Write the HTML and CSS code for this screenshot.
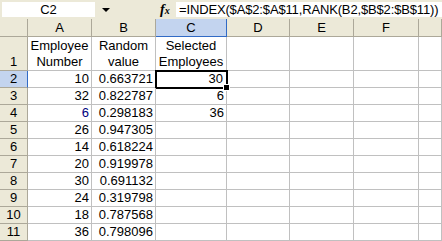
FILE: index.html
```html
<!DOCTYPE html>
<html lang="en">
<head>
    <meta charset="UTF-8">
    <title>Sheet</title>
    <link rel="stylesheet" href="styles.css">
</head>
<body>
    <div class="formula-bar">
        <div class="name-box">C2</div>
        <div class="name-arrow"></div>
        <div class="fx"><i>f</i><span class="x">x</span></div>
        <div class="formula">=INDEX($A$2:$A$11,RANK(B2,$B$2:$B$11))</div>
    </div>

    <div class="sheet">
        <div class="hd corner"></div>
        <div class="hd col">A</div>
        <div class="hd col">B</div>
        <div class="hd col sel">C</div>
        <div class="hd col">D</div>
        <div class="hd col">E</div>
        <div class="hd col">F</div>
        <div class="hd col"></div>

        <div class="hd row tall">1</div>
        <div class="cell label">Employee<br>Number</div>
        <div class="cell label">Random<br>value</div>
        <div class="cell label">Selected<br>Employees</div>
        <div class="cell"></div><div class="cell"></div><div class="cell"></div><div class="cell"></div>

        <div class="hd row sel">2</div>
        <div class="cell num">10</div><div class="cell num">0.663721</div>
        <div class="cell num active">30<span class="handle"></span></div>
        <div class="cell"></div><div class="cell"></div><div class="cell"></div><div class="cell"></div>

        <div class="hd row">3</div>
        <div class="cell num">32</div><div class="cell num">0.822787</div><div class="cell num">6</div>
        <div class="cell"></div><div class="cell"></div><div class="cell"></div><div class="cell"></div>

        <div class="hd row">4</div>
        <div class="cell num blue">6</div><div class="cell num">0.298183</div><div class="cell num">36</div>
        <div class="cell"></div><div class="cell"></div><div class="cell"></div><div class="cell"></div>

        <div class="hd row">5</div>
        <div class="cell num">26</div><div class="cell num">0.947305</div><div class="cell"></div>
        <div class="cell"></div><div class="cell"></div><div class="cell"></div><div class="cell"></div>

        <div class="hd row">6</div>
        <div class="cell num">14</div><div class="cell num">0.618224</div><div class="cell"></div>
        <div class="cell"></div><div class="cell"></div><div class="cell"></div><div class="cell"></div>

        <div class="hd row">7</div>
        <div class="cell num">20</div><div class="cell num">0.919978</div><div class="cell"></div>
        <div class="cell"></div><div class="cell"></div><div class="cell"></div><div class="cell"></div>

        <div class="hd row">8</div>
        <div class="cell num">30</div><div class="cell num">0.691132</div><div class="cell"></div>
        <div class="cell"></div><div class="cell"></div><div class="cell"></div><div class="cell"></div>

        <div class="hd row">9</div>
        <div class="cell num">24</div><div class="cell num">0.319798</div><div class="cell"></div>
        <div class="cell"></div><div class="cell"></div><div class="cell"></div><div class="cell"></div>

        <div class="hd row">10</div>
        <div class="cell num">18</div><div class="cell num">0.787568</div><div class="cell"></div>
        <div class="cell"></div><div class="cell"></div><div class="cell"></div><div class="cell"></div>

        <div class="hd row">11</div>
        <div class="cell num">36</div><div class="cell num">0.798096</div><div class="cell"></div>
        <div class="cell"></div><div class="cell"></div><div class="cell"></div><div class="cell"></div>
    </div>
</body>
</html>
```

FILE: styles.css
```css
body {
    margin: 0;
    width: 442px;
    height: 241px;
    overflow: hidden;
    background: #fff;
    font-family: "Liberation Sans", Arial, sans-serif;
    font-size: 13px;
    color: #000;
}

.formula-bar {
    display: flex;
    align-items: center;
    height: 19px;
    box-sizing: border-box;
    background: #ece9d8;
}

.name-box {
    width: 93px;
    height: 15px;
    margin-left: 2px;
    background: #fff;
    text-align: center;
    line-height: 15px;
}

.name-arrow {
    width: 0;
    height: 0;
    margin-left: 7px;
    border-left: 4px solid transparent;
    border-right: 4px solid transparent;
    border-top: 4px solid #000;
}

.fx {
    margin-left: 50px;
    width: 15px;
    font-family: "Liberation Serif", serif;
    font-size: 14px;
    font-weight: bold;
    line-height: 15px;
}

.fx .x {
    font-size: 10px;
    font-style: italic;
}

.formula {
    flex: 1;
    height: 15px;
    margin-left: 1px;
    padding-left: 3px;
    background: #fff;
    line-height: 15px;
    letter-spacing: -0.15px;
    white-space: nowrap;
}

.sheet {
    display: grid;
    grid-template-columns: 28px 64px 64px 71px 63px 64px 65px 1fr;
    grid-template-rows: 18px 34px repeat(10, 17px);
}

.hd {
    box-sizing: border-box;
    background: #ece9d8;
    border-right: 1px solid #aca899;
    border-bottom: 1px solid #aca899;
    text-align: center;
    line-height: 17px;
}

.hd.row {
    line-height: 16px;
}

.hd.tall {
    padding-top: 17px;
}

.hd.sel {
    background: #c3d4ef;
}

.hd.col.sel {
    border-right-color: #316ac5;
    border-bottom-color: #316ac5;
}

.hd.row.sel {
    border-right-color: #316ac5;
}

.cell {
    position: relative;
    box-sizing: border-box;
    border-right: 1px solid #c0c0c0;
    border-bottom: 1px solid #c0c0c0;
    line-height: 16px;
    padding: 0 2px;
    white-space: nowrap;
}

.label {
    text-align: center;
    padding-top: 1px;
}

.num {
    text-align: right;
}

.blue {
    color: #000080;
}

.active {
    outline: 2px solid #000;
    outline-offset: -1px;
    padding-right: 3px;
}

.handle {
    position: absolute;
    right: -4px;
    bottom: -4px;
    width: 5px;
    height: 5px;
    background: #000;
    border: 1px solid #fff;
    z-index: 2;
}
```
